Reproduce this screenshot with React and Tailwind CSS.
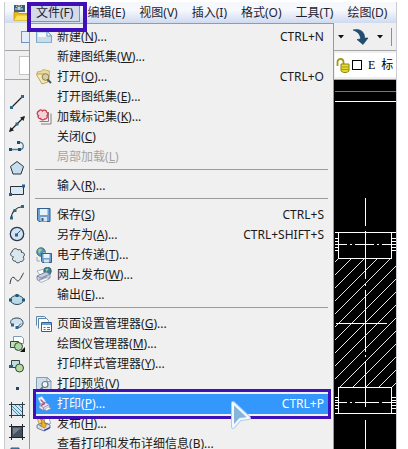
import React, { useState } from 'react';

const menus = ['文件(F)', '编辑(E)', '视图(V)', '插入(I)', '格式(O)', '工具(T)', '绘图(D)'];

const NewIcon = () => (
  <svg viewBox="0 0 16 16" className="size-4">
    <path d="M0.5 2.5h11l4 4v7h-15z" fill="#c9dcea" stroke="#7aa3c4" />
    <path d="M2 4h8v4h-8z" fill="#f3f9fc" />
    <path d="M11 2.5v4.5h4.5z" fill="#fff" stroke="#6f9fc6" />
    <path d="M1 13.5h14.5" stroke="#8ab1cd" />
  </svg>
);

const OpenIcon = () => (
  <svg viewBox="0 0 16 16" className="size-4">
    <path d="M1 3l5-1 1-1.500 6.500 1.500-.5 9-7 3.500z" fill="#eadb9b" stroke="#c0a55a" strokeWidth=".8" />
    <path d="M0 5l9 0 3 8-6 2z" fill="#f4e9b6" stroke="#b3984d" strokeWidth=".8" />
    <circle cx="9.500" cy="8" r="3.300" fill="#d9cfa5" stroke="#8b8056" />
    <path d="M11.500 10.500l3.500 3.500" stroke="#51555a" strokeWidth="2" />
  </svg>
);

const MarkupIcon = () => (
  <svg viewBox="0 0 16 16" className="size-4">
    <path d="M12.500 3v9.500h-9M15 4.500v10.500h-10" fill="none" stroke="#8f7d83" />
    <path d="M3 2c1-2 3-1 3.500 0c1-1.500 4-1 4 1c2 1 1.500 3 .5 3.500c1 2-1 4-2.500 3.500c-1 1.500-3.500 1-4-.5c-2 .5-3-2-2-3c-2-1-1.500-4 .5-4.500z" fill="#f3d3d8" stroke="#cf3a4e" strokeWidth="1.300" />
  </svg>
);

const SaveIcon = () => (
  <svg viewBox="0 0 16 16" className="size-4">
    <path d="M1.500 1.500h12.500v13h-11l-1.500-1.500z" fill="#6f9fce" stroke="#2f5f93" />
    <path d="M4 2h7.500v6h-7.500z" fill="#e8f2fa" />
    <path d="M4.500 10h6.500v4.500h-6.500z" fill="#dbe4ec" />
    <path d="M5.500 11h2v3h-2z" fill="#2f5f93" />
  </svg>
);

const TransmitIcon = () => (
  <svg viewBox="0 0 16 16" className="size-4">
    <circle cx="5" cy="5" r="4.300" fill="#4f93b8" stroke="#37647f" strokeWidth=".8" />
    <path d="M2 3c2-2 4-1 4 0s-2 1-2 3-2 0-2-3zM7 5l2 0-1 3z" fill="#9fd08b" />
    <path d="M5.500 6.500h10v9h-9l-1-1z" fill="#6f9fce" stroke="#2f5f93" />
    <path d="M7.500 7h6v4h-6z" fill="#e8f2fa" />
    <path d="M8 12.500h5v3h-5z" fill="#dbe4ec" />
    <path d="M1 10v4h3" fill="none" stroke="#9aa9b5" />
  </svg>
);

const WebIcon = () => (
  <svg viewBox="0 0 16 16" className="size-4">
    <path d="M1 4l7-2 3 3-7 3z" fill="#fff" stroke="#8f9aa5" strokeWidth=".8" />
    <circle cx="11.500" cy="4" r="3.800" fill="#3f7f93" stroke="#2d5666" strokeWidth=".8" />
    <path d="M9.500 2.500c1-1.500 3-1 3 0s-2 1-2 2.500z" fill="#8fc8a0" />
    <path d="M1 9l9-4 4 2v4l-9 4-4-2.500z" fill="#c9cfe0" stroke="#707b99" strokeWidth=".8" />
    <path d="M1 9l4 2 9-4M3 13l8-3.500" fill="none" stroke="#707b99" strokeWidth=".8" />
    <path d="M3 13.500l8-3 2 1.500-8 3.500z" fill="#f7f8fc" stroke="#8b93aa" strokeWidth=".6" />
  </svg>
);

const PageSetupIcon = () => (
  <svg viewBox="0 0 16 16" className="size-4">
    <path d="M.5 9.500v-9h8l2 2v2" fill="#e9f3fa" stroke="#5d86a8" />
    <path d="M2.500 12.500v-10h8l2 2v1" fill="#fff" stroke="#5d86a8" />
    <path d="M5.500 6.500h10v9h-10z" fill="#fff" stroke="#2f5f93" />
    <path d="M6 7h9v2h-9z" fill="#6f9fce" />
    <path d="M7.500 11.500h2M11 11.500h3M7.500 13.500h2M11 13.500h3" stroke="#5d7486" />
  </svg>
);

const PreviewIcon = () => (
  <svg viewBox="0 0 16 16" className="size-4">
    <path d="M.5 1.500h11l3.500 3.500v9.500h-14.500z" fill="#cfdeea" stroke="#7f9db5" />
    <path d="M11 1.500v4h4z" fill="#fff" stroke="#7f9db5" />
    <circle cx="9" cy="8.500" r="3" fill="#f1f7fb" stroke="#66788a" strokeWidth="1.200" />
    <path d="M7 11l-3 3" stroke="#66788a" strokeWidth="1.800" />
  </svg>
);

const PrintIcon = () => (
  <svg viewBox="0 0 16 16" className="size-4">
    <path d="M2 2l4-1.500 4 5.500-5 2.500z" fill="#f4f7fd" stroke="#a9c3e6" strokeWidth=".8" />
    <path d="M3 9l6-3 4.500 2.500v3l-6 3-4.500-2.500z" fill="#e3e4f2" stroke="#7880a8" strokeWidth=".8" />
    <path d="M3 9l4.500 2.500 6-3M7.500 11.500v3" fill="none" stroke="#7880a8" strokeWidth=".8" />
    <path d="M4.500 3.500l4 4" stroke="#b65b8c" strokeWidth="1.400" />
    <path d="M5 9.500l4-2" stroke="#a33a66" strokeWidth="1.300" />
    <path d="M8.500 13l4.500-2 2 1.500-4.500 2z" fill="#fff" stroke="#b98ea6" strokeWidth=".6" />
  </svg>
);

const PublishIcon = () => (
  <svg viewBox="0 0 16 16" className="size-4">
    <path d="M1 1.500l4-.5 2 5-4 2z" fill="#f6d673" stroke="#bd9427" strokeWidth=".8" />
    <path d="M8 3l5-1.500 1.500 6-5 1z" fill="#fff" stroke="#8893ac" strokeWidth=".8" />
    <path d="M1 9l7-2.500 6 2.500v3l-6 3-7-3z" fill="#d9dcea" stroke="#5d6687" strokeWidth=".8" />
    <path d="M4.500 3c3 0 4.500 2 4.500 5l2.500-1-3 5-5-2.500 2.500-.5c0-2 0-4-1.500-6z" fill="#f0b52c" stroke="#8f6010" strokeWidth=".6" />
    <path d="M8 14.500l6-3" stroke="#2c3c88" strokeWidth="1.300" />
  </svg>
);

const fileMenu = [
  [
    { text: '新建', mnemonic: 'N', dots: true, keys: 'CTRL+N', Icon: NewIcon },
    { text: '新建图纸集', mnemonic: 'W', dots: true },
    { text: '打开', mnemonic: 'O', dots: true, keys: 'CTRL+O', Icon: OpenIcon },
    { text: '打开图纸集', mnemonic: 'E', dots: true },
    { text: '加载标记集', mnemonic: 'K', dots: true, Icon: MarkupIcon },
    { text: '关闭', mnemonic: 'C' },
    { text: '局部加载', mnemonic: 'L', disabled: true },
  ],
  [{ text: '输入', mnemonic: 'R', dots: true }],
  [
    { text: '保存', mnemonic: 'S', keys: 'CTRL+S', Icon: SaveIcon },
    { text: '另存为', mnemonic: 'A', dots: true, keys: 'CTRL+SHIFT+S' },
    { text: '电子传递', mnemonic: 'T', dots: true, Icon: TransmitIcon },
    { text: '网上发布', mnemonic: 'W', dots: true, Icon: WebIcon },
    { text: '输出', mnemonic: 'E', dots: true },
  ],
  [
    { text: '页面设置管理器', mnemonic: 'G', dots: true, Icon: PageSetupIcon },
    { text: '绘图仪管理器', mnemonic: 'M', dots: true },
    { text: '打印样式管理器', mnemonic: 'Y', dots: true },
    { text: '打印预览', mnemonic: 'V', Icon: PreviewIcon },
    { text: '打印', mnemonic: 'P', dots: true, keys: 'CTRL+P', Icon: PrintIcon },
    { text: '发布', mnemonic: 'H', dots: true, Icon: PublishIcon },
    { text: '查看打印和发布详细信息', mnemonic: 'B', dots: true },
  ],
];

// draw toolbar, top to bottom
const tools = [
  { name: '直线', art: <><path d="M2.500 13.500L13.500 2.500" stroke="#222" strokeWidth="1.300" /><path d="M1 12h3v3h-3zM12 1h3v3h-3z" fill="#2a6a86" /></> },
  { name: '构造线', art: <><path d="M1 15L15 1" stroke="#222" strokeWidth="1.300" /><path d="M0 16l1.500-5 3.500 3.500zM16 0l-5 1.500 3.500 3.500z" fill="#222" /><path d="M6.500 6.500h3v3h-3z" fill="#2a6a86" /></> },
  { name: '多段线', art: <><path d="M1 11.500h11c3-1 3-6 0-7h-3" stroke="#4583a3" strokeWidth="1.300" /><path d="M0 10h3v3h-3zM9 10h3v3h-3zM8 3h3v3h-3z" fill="#2b4a5c" /></> },
  { name: '正多边形', art: <path d="M8 1.500l6.500 5-2.500 7.500h-8l-2.500-7.500z" fill="#c5deef" stroke="#2c3238" /> },
  { name: '矩形', art: <><path d="M1.500 4.500h13v8h-13z" fill="#d9e9f4" stroke="#2c3238" /><path d="M0 11h3v3h-3zM13 2.500h3v3h-3z" fill="#285c8b" /></> },
  { name: '圆弧', art: <><path d="M2.500 14c0-6 4-10.500 11-11.500" stroke="#222" strokeWidth="1.200" /><path d="M1 12.500h3v3h-3zM4.500 5h3v3h-3zM12 1h3v3h-3z" fill="#2a6a86" /></> },
  { name: '圆', art: <><circle cx="8" cy="8" r="6.700" fill="#d3e4f1" stroke="#2c3850" strokeWidth="1.300" /><path d="M7.500 8.500l4-4" stroke="#315f8a" /><path d="M6 7.500h3v3h-3z" fill="#315f8a" /></> },
  { name: '修订云线', art: <path d="M4 2c1-2 4-1.500 5 0c2-1 4 0 3.500 2.500c3-.5 4 3 1.500 4.500c2 2 0 5-2.500 4.500c-1.500 2-5 1.500-5-.5c-3 .5-4-2.500-2-4c-3-.5-4-4-1.500-5c0-1 .5-1.500 1-2z" fill="#d8e6ee" stroke="#39444c" /> },
  { name: '样条曲线', art: <path d="M1 14c1-7 3-8 5-5.500s3 4 5.500 0S14 3 15 3" stroke="#333" /> },
  { name: '椭圆', art: <><ellipse cx="8" cy="8" rx="6.500" ry="4.500" fill="#b7d9e8" stroke="#2c4856" /><path d="M0 6.500h3v3h-3zM13 6.500h3v3h-3zM6.500 2h3v3h-3z" fill="#225878" /></> },
  { name: '椭圆弧', art: <><path d="M3 11c-3-3-1-7 5-7s8 6 4 8.500c-2 1.500-4 1-4 1l4-4" fill="#cfe2ef" stroke="#2c4856" /><path d="M6.500 12h3v3h-3zM2 9.500h3v3h-3z" fill="#2b6594" /></> },
  { name: '插入块', art: <><path d="M4.500.5h8l2 2v5h-10z" fill="#fff" stroke="#7b9cb8" /><path d="M1.500 5.500h8v6h-8z" fill="#bfe0b5" stroke="#30453b" /><circle cx="9.500" cy="10.500" r="4" fill="#acd7a1" stroke="#30453b" /><path d="M16 11v5h-5z" fill="#111" /></> },
  { name: '创建块', art: <><path d="M2.500 2.500h8v7h-8z" fill="#bfdde0" stroke="#30453b" /><circle cx="10.500" cy="10" r="4" fill="#b7d99b" stroke="#30453b" /><path d="M0 7h4v3h-4z" fill="#315d72" /></> },
  { name: '点', art: <path d="M7 7h3v3h-3z" fill="#246" /> },
  { name: '图案填充', art: <><path d="M2.500 2.500h11v11h-11z" fill="#cfe5f0" /><path d="M2 6l8 8M2 3l11 11M5 2l9 9M9 2l5 5" stroke="#4b8ba8" /><path d="M2.500 0v16M13.500 0v16M0 2.500h16M0 13.500h16" stroke="#2d3c47" /></> },
  { name: '渐变色', art: <><path d="M2 2h12v12h-12z" fill="#44515e" /><path d="M4 4h8l-8 7z" fill="#75818c" /><path d="M2.500 0v16M13.500 0v16M0 2.500h16M0 13.500h16" stroke="#1e242a" /></> },
  { name: '面域', art: <path d="M2 2h8v8h-8z" fill="#4b87b2" stroke="#245682" /> },
];

const Outline = ({ className }) => (
  <span className={`pointer-events-none absolute z-20 border-[#3f0fba] ${className}`} />
);

const MenuItem = ({ item, active, onPick }) => {
  const { text, mnemonic, dots, keys, Icon, disabled } = item;
  return (
    <button
      type="button"
      role="menuitem"
      disabled={disabled}
      onClick={onPick}
      className={`relative flex h-5 w-full items-center gap-[5px] pr-1 pl-px text-left leading-none ${
        active ? 'bg-[#3397fb] text-white' : disabled ? 'text-[#a3a3a3]' : 'text-[#1a1a1a]'
      }`}
    >
      <span className="size-4 shrink-0">{Icon && <Icon />}</span>
      <span className="flex-1 whitespace-nowrap">
        {text}(<u className="underline-offset-1">{mnemonic}</u>){dots && '...'}
      </span>
      {keys && <span>{keys}</span>}
      {active && <Outline className="-inset-y-[5px] -right-[3px] -left-0.5 border-3" />}
      {active && (
        <svg viewBox="0 0 24 30" className="pointer-events-none absolute top-1.5 left-[195px] z-30 h-[30px] w-6">
          <path d="M3 3l16 15-9 1-7 8z" fill="none" stroke="#a9cdf0" strokeWidth="4" strokeLinejoin="round" />
          <path d="M3 3l16 15-9 1-7 8z" fill="#86b5dc" stroke="#f4f9ff" strokeWidth="2" strokeLinejoin="round" />
        </svg>
      )}
    </button>
  );
};

const Drawing = () => (
  <svg viewBox="0 0 61 369" className="h-[369px] w-[61px]" fill="none" stroke="#fff" shapeRendering="crispEdges">
    <defs>
      <pattern id="hatch" width="13" height="13" patternUnits="userSpaceOnUse">
        <path d="M-1 14L14 -1M-1 1L1 -1M12 14L14 12" stroke="#e6e6e6" />
      </pattern>
    </defs>
    <path d="M0 11.500h61" stroke="#777" />
    <path d="M0 21.500h61" />
    <path d="M0 178h61v129h-61z" fill="url(#hatch)" stroke="none" />
    <path d="M0 152.500h61M3.500 152.500v26h53v-26M0 164.500h12M15 164.500h2M20 164.500h19M42 164.500h2M47 164.500h14" />
    <path d="M0 158.500h3M0 161.500h3M0 167.500h3M0 170.500h3M57 158.500h4M57 161.500h4M57 167.500h4M57 170.500h4" />
    <path d="M30.500 118v28M30.500 151v48M30.500 204v2M30.500 210v62M30.500 275v2M30.500 281v46M30.500 340v29" />
    <path d="M1 243.500h51" />
    <path d="M3.500 333v-26h53v26M0 333.500h61M0 322.500h12M15 322.500h2M20 322.500h24M47 322.500h14" />
    <path d="M0 317.500h3M0 320.500h3M0 325.500h3M0 328.500h3M57 317.500h4M57 320.500h4M57 325.500h4M57 328.500h4" />
  </svg>
);

const Caret = () => (
  <svg viewBox="0 0 6 4" className="h-1 w-1.5"><path d="M0 0h6l-3 3.500z" fill="#111" /></svg>
);

const App = () => {
  const [picked, setPicked] = useState('打印');

  return (
    <div className="h-screen overflow-hidden bg-white pt-0.5 pr-[11px] pl-1 font-['Noto_Sans','Noto_Sans_CJK_SC',sans-serif] text-xs">
      <div className="relative flex h-full flex-col border-x border-[#c9ccd0] bg-[#efefef]">
        <nav className="flex h-[21px] shrink-0 items-center bg-linear-to-b from-[#f6f8fc] from-40% to-[#cfdaf0] pl-2">
          <svg viewBox="0 0 16 16" className="size-4 shrink-0">
            <path d="M1 0h11v7h-11z" fill="#3c5f73" />
            <path d="M3 1l3 2 3-2M6 0v5M2 4h8" stroke="#dcebf3" />
            <path d="M1 7h4l1 1.500h8v7h-13z" fill="#e7b91e" stroke="#a87f10" strokeWidth=".6" />
            <path d="M1 15.500l3-5h12l-2.500 5z" fill="#fbe35a" />
          </svg>
          {menus.map((label, i) => (
            <button
              key={label}
              type="button"
              className={`relative h-[19px] shrink-0 border px-1.5 text-[#1d2430] ${
                i === 0 ? 'border-[#8a90a8] bg-[#d3daea]' : 'border-transparent'
              }`}
            >
              {label}
              {i === 0 && <Outline className="-top-0.5 -right-2 -bottom-[11px] -left-[3px] border-4" />}
            </button>
          ))}
        </nav>

        <div className="flex h-7 shrink-0 items-center justify-between border-b border-[#a5a5a5] pl-4">
          <button type="button" aria-label="新建" className="h-3 w-4 border border-[#6f93c4] bg-[#e3ecf8]" />
          <div className="flex items-center gap-2 pr-1">
            <Caret />
            <button type="button" aria-label="重做">
              <svg viewBox="0 0 17 17" className="size-[17px]">
                <path d="M1 2c7-2 12 2 11.500 8h3.500l-5 6.500-6-5 3.500-.5c0-4-2-7-7.500-9z" fill="#1f4f73" stroke="#173c58" strokeWidth=".6" />
              </svg>
            </button>
            <Caret />
            <span className="h-[18px] w-px bg-[#8d8d8d]" />
          </div>
        </div>

        <div className="flex h-[29px] shrink-0 items-center justify-between border-b border-[#a5a5a5] pl-3.5">
          <span className="h-[19px] w-4 border border-[#c4c4c4] bg-white" />
          <label className="flex h-6 w-[61px] items-center gap-0.5 bg-white pl-px">
            <svg viewBox="0 0 14 15" className="h-[15px] w-3.5 shrink-0">
              <path d="M1.500 8v-4c0-4 6-4 6 0v4" fill="none" stroke="#a39a16" strokeWidth="1.800" />
              <path d="M5 6h8v7c-2 2-6 2-8 0z" fill="#e6dc2f" stroke="#8d8512" />
              <path d="M5 9h8M5 11.500h8" stroke="#a39a16" />
            </svg>
            <span className="size-2.5 shrink-0 border border-black" />
            <select aria-label="图层" className="w-8 appearance-none pl-1 font-['Liberation_Serif','Noto_Sans_CJK_SC',serif] text-black">
              <option>E&nbsp;&nbsp;标</option>
            </select>
          </label>
        </div>

        <div className="flex min-h-0 flex-1">
          <div className="flex w-6 shrink-0 flex-col items-center gap-1.5 overflow-hidden pt-3.5">
            {tools.map((tool) => (
              <button key={tool.name} type="button" aria-label={tool.name} className="size-4 shrink-0">
                <svg viewBox="0 0 16 16" className="size-4" fill="none">{tool.art}</svg>
              </button>
            ))}
          </div>
          <div className="flex flex-1 justify-end overflow-hidden bg-black">
            <Drawing />
          </div>
        </div>

        <div className="absolute top-[21px] left-6 w-[305px] border border-[#9a9a9a] bg-[#f0f0f0] px-[5px] py-[3px]" role="menu">
          {fileMenu.map((group, i) => (
            <div key={i}>
              {i > 0 && <hr className="mt-0.5 mb-1.5 border-[#9c9c9c]" />}
              {group.map((item) => (
                <MenuItem key={item.text} item={item} active={item.text === picked} onPick={() => setPicked(item.text)} />
              ))}
            </div>
          ))}
        </div>
      </div>
    </div>
  );
};

export default App;
